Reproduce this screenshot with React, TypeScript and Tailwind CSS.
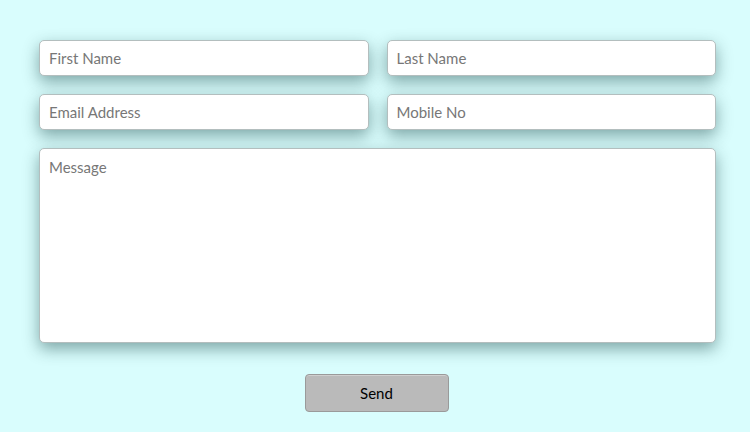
export default function App() {
  const field =
    "h-[36px] w-full rounded-[5px] border border-[#b3bebe] bg-white px-[9px] text-[15px] text-[#555] placeholder-[#777] shadow-[0_6px_16px_rgba(0,50,50,0.42)] outline-none"

  return (
    <div className="min-h-screen bg-[#d9fdfd] pt-[40px] pl-[39px] font-['Lato','Open_Sans',sans-serif]">
      <form className="flex w-[677px] flex-col" onSubmit={(e) => e.preventDefault()}>
        <div className="grid grid-cols-2 gap-x-[18px] gap-y-[18px]">
          <input className={field} placeholder="First Name" />
          <input className={field} placeholder="Last Name" />
          <input className={field} placeholder="Email Address" />
          <input className={field} placeholder="Mobile No" />
        </div>
        <textarea
          className="mt-[18px] h-[195px] w-full resize-none rounded-[5px] border border-[#b3bebe] bg-white px-[9px] py-[7px] text-[15px] text-[#555] placeholder-[#777] shadow-[0_6px_16px_rgba(0,50,50,0.42)] outline-none"
          placeholder="Message"
        />
        <div className="mt-[31px] flex justify-center pr-[2px]">
          <button
            type="submit"
            className="h-[38px] w-[144px] rounded-[4px] border border-[#9a9a9a] bg-[#bababa] text-[15px] text-black shadow-[inset_0_1px_0_rgba(255,255,255,0.3)]"
          >
            Send
          </button>
        </div>
      </form>
    </div>
  )
}
